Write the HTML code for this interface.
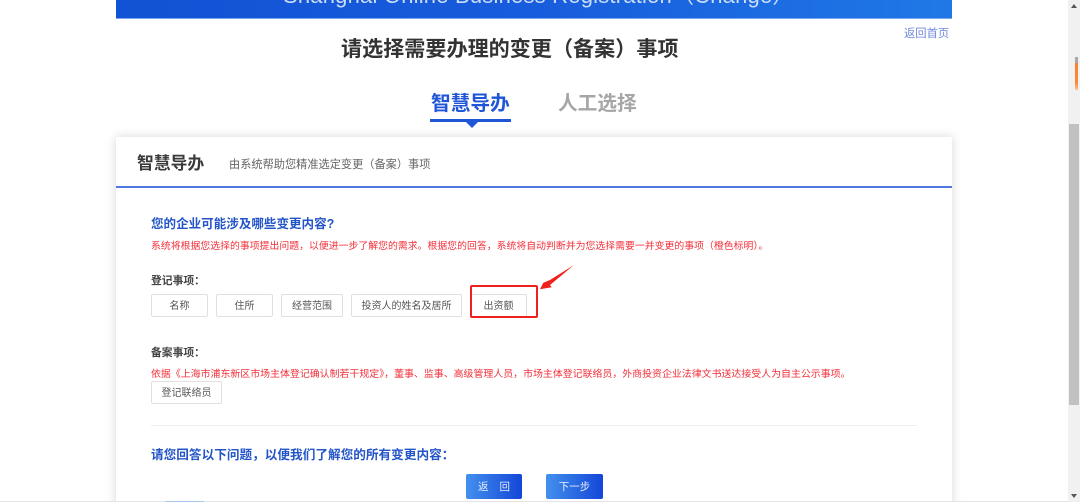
<!DOCTYPE html>
<html lang="zh">
<head>
<meta charset="utf-8">
<title>变更事项</title>
<style>
html,body{margin:0;padding:0;width:1080px;height:502px;overflow:hidden;background:#fff}
body{position:relative;font-family:"Liberation Sans","Noto Sans CJK SC",sans-serif}
.a{position:absolute;white-space:nowrap;line-height:1}
.btn{position:absolute;box-sizing:border-box;border:1px solid #e0e0e0;border-radius:2px;background:#fff;color:#555;font-size:10px;text-align:center;white-space:nowrap}
.pri{position:absolute;box-sizing:border-box;height:25px;top:474px;border-radius:2px;background:linear-gradient(90deg,#4390ee,#1346d8);color:#e6eefc;font-size:10.5px;line-height:27px;text-align:center;white-space:nowrap}
</style>
</head>
<body>
<!-- banner -->
<div class="a" style="left:116px;top:0;width:836px;height:19px;overflow:hidden;background:linear-gradient(90deg,#1252d4 0%,#175cdc 50%,#2078e6 100%);border-bottom:1px solid #7ba6ee;box-sizing:border-box">
  <div class="a" style="left:167px;top:-17px;font-size:22px;line-height:26px;letter-spacing:.2px;color:#c9dcfa">Shanghai Online Business Registration（Change）</div>
</div>

<div class="a" style="left:341px;top:39px;font-size:21.1px;font-weight:bold;color:#333">请选择需要办理的变更（备案）事项</div>
<div class="a" style="left:904px;top:29px;font-size:11.3px;color:#6f88dc">返回首页</div>

<!-- tabs -->
<div class="a" style="left:431px;top:95px;font-size:19.7px;font-weight:bold;color:#1f55d6">智慧导办</div>
<div class="a" style="left:430px;top:119px;width:81px;height:3px;background:#1f55d6"></div>
<div class="a" style="left:466px;top:122px;width:0;height:0;border-left:6px solid transparent;border-right:6px solid transparent;border-top:6px solid #1f55d6"></div>
<div class="a" style="left:558px;top:95px;font-size:19.7px;font-weight:bold;color:#a6a6a6">人工选择</div>

<!-- card -->
<div class="a" style="left:116px;top:137px;width:836px;height:380px;background:#fff;box-shadow:0 0 10px rgba(0,0,0,.16)"></div>
<div class="a" style="left:116px;top:186px;width:836px;height:2px;background:#4f78de"></div>
<div class="a" style="left:137px;top:156px;font-size:16.8px;font-weight:bold;color:#3a3a3a">智慧导办</div>
<div class="a" style="left:229px;top:160px;font-size:11.2px;color:#666">由系统帮助您精准选定变更（备案）事项</div>

<div class="a" style="left:151px;top:218px;font-size:12.55px;font-weight:bold;color:#2355c8">您的企业可能涉及哪些变更内容?</div>
<div class="a" style="left:151px;top:241.5px;font-size:9.88px;color:#f3303a">系统将根据您选择的事项提出问题，以便进一步了解您的需求。根据您的回答，系统将自动判断并为您选择需要一并变更的事项（橙色标明）。</div>

<div class="a" style="left:151px;top:276px;font-size:10.8px;font-weight:bold;color:#444">登记事项：</div>
<div class="btn" style="left:151px;top:294px;width:57px;height:23px;line-height:23.5px">名称</div>
<div class="btn" style="left:216px;top:294px;width:57px;height:23px;line-height:23.5px">住所</div>
<div class="btn" style="left:281px;top:294px;width:62px;height:23px;line-height:23.5px">经营范围</div>
<div class="btn" style="left:351px;top:294px;width:111px;height:23px;line-height:23.5px">投资人的姓名及居所</div>
<div class="btn" style="left:470px;top:294px;width:57px;height:23px;line-height:23.5px">出资额</div>

<!-- annotation -->
<div class="a" style="left:470px;top:285px;width:68px;height:33px;box-sizing:border-box;border:2px solid #f0201c;border-radius:2px"></div>
<svg class="a" style="left:535px;top:262px" width="42" height="30" viewBox="0 0 42 30"><path d="M39 3 L15 18 L8.3 20.7 L5 27.3 L16.7 25.3 L15 23 Z" fill="#f0201c"/></svg>

<div class="a" style="left:151px;top:348px;font-size:10.8px;font-weight:bold;color:#444">备案事项：</div>
<div class="a" style="left:151px;top:370px;font-size:9.93px;color:#f3303a">依据《上海市浦东新区市场主体登记确认制若干规定》，董事、监事、高级管理人员，市场主体登记联络员，外商投资企业法律文书送达接受人为自主公示事项。</div>
<div class="btn" style="left:151px;top:381px;width:71px;height:23px;line-height:23.5px">登记联络员</div>

<div class="a" style="left:151px;top:425px;width:766px;height:1px;background:#eee"></div>
<div class="a" style="left:151px;top:449px;font-size:12.65px;font-weight:bold;color:#2355c8">请您回答以下问题，以便我们了解您的所有变更内容：</div>

<div class="pri" style="left:466px;width:56px;word-spacing:8px">返 回</div>
<div class="pri" style="left:546px;width:57px">下一步</div>

<!-- bottom strip -->
<div class="a" style="left:0;top:501px;width:1069px;height:1px;background:#e4e4e4"></div>
<div class="a" style="left:165px;top:501px;width:39px;height:1px;background:#a9c6ee"></div>

<!-- scrollbar -->
<div class="a" style="left:1068px;top:0;width:12px;height:502px;background:#f1f1f1"></div>
<div class="a" style="left:1069px;top:124px;width:10px;height:281px;background:#c1c1c1"></div>
<div class="a" style="left:1071px;top:4px;width:0;height:0;border-left:3px solid transparent;border-right:3px solid transparent;border-bottom:4px solid #555"></div>
<div class="a" style="left:1071px;top:494px;width:0;height:0;border-left:3px solid transparent;border-right:3px solid transparent;border-top:4px solid #555"></div>
<div class="a" style="left:1075px;top:57px;width:3px;height:6px;background:#a8a8a8"></div>
<div class="a" style="left:1075px;top:63px;width:3px;height:27px;background:linear-gradient(180deg,#f98032 0%,#fb8a3e 75%,#fdc79b 100%)"></div>
</body>
</html>
